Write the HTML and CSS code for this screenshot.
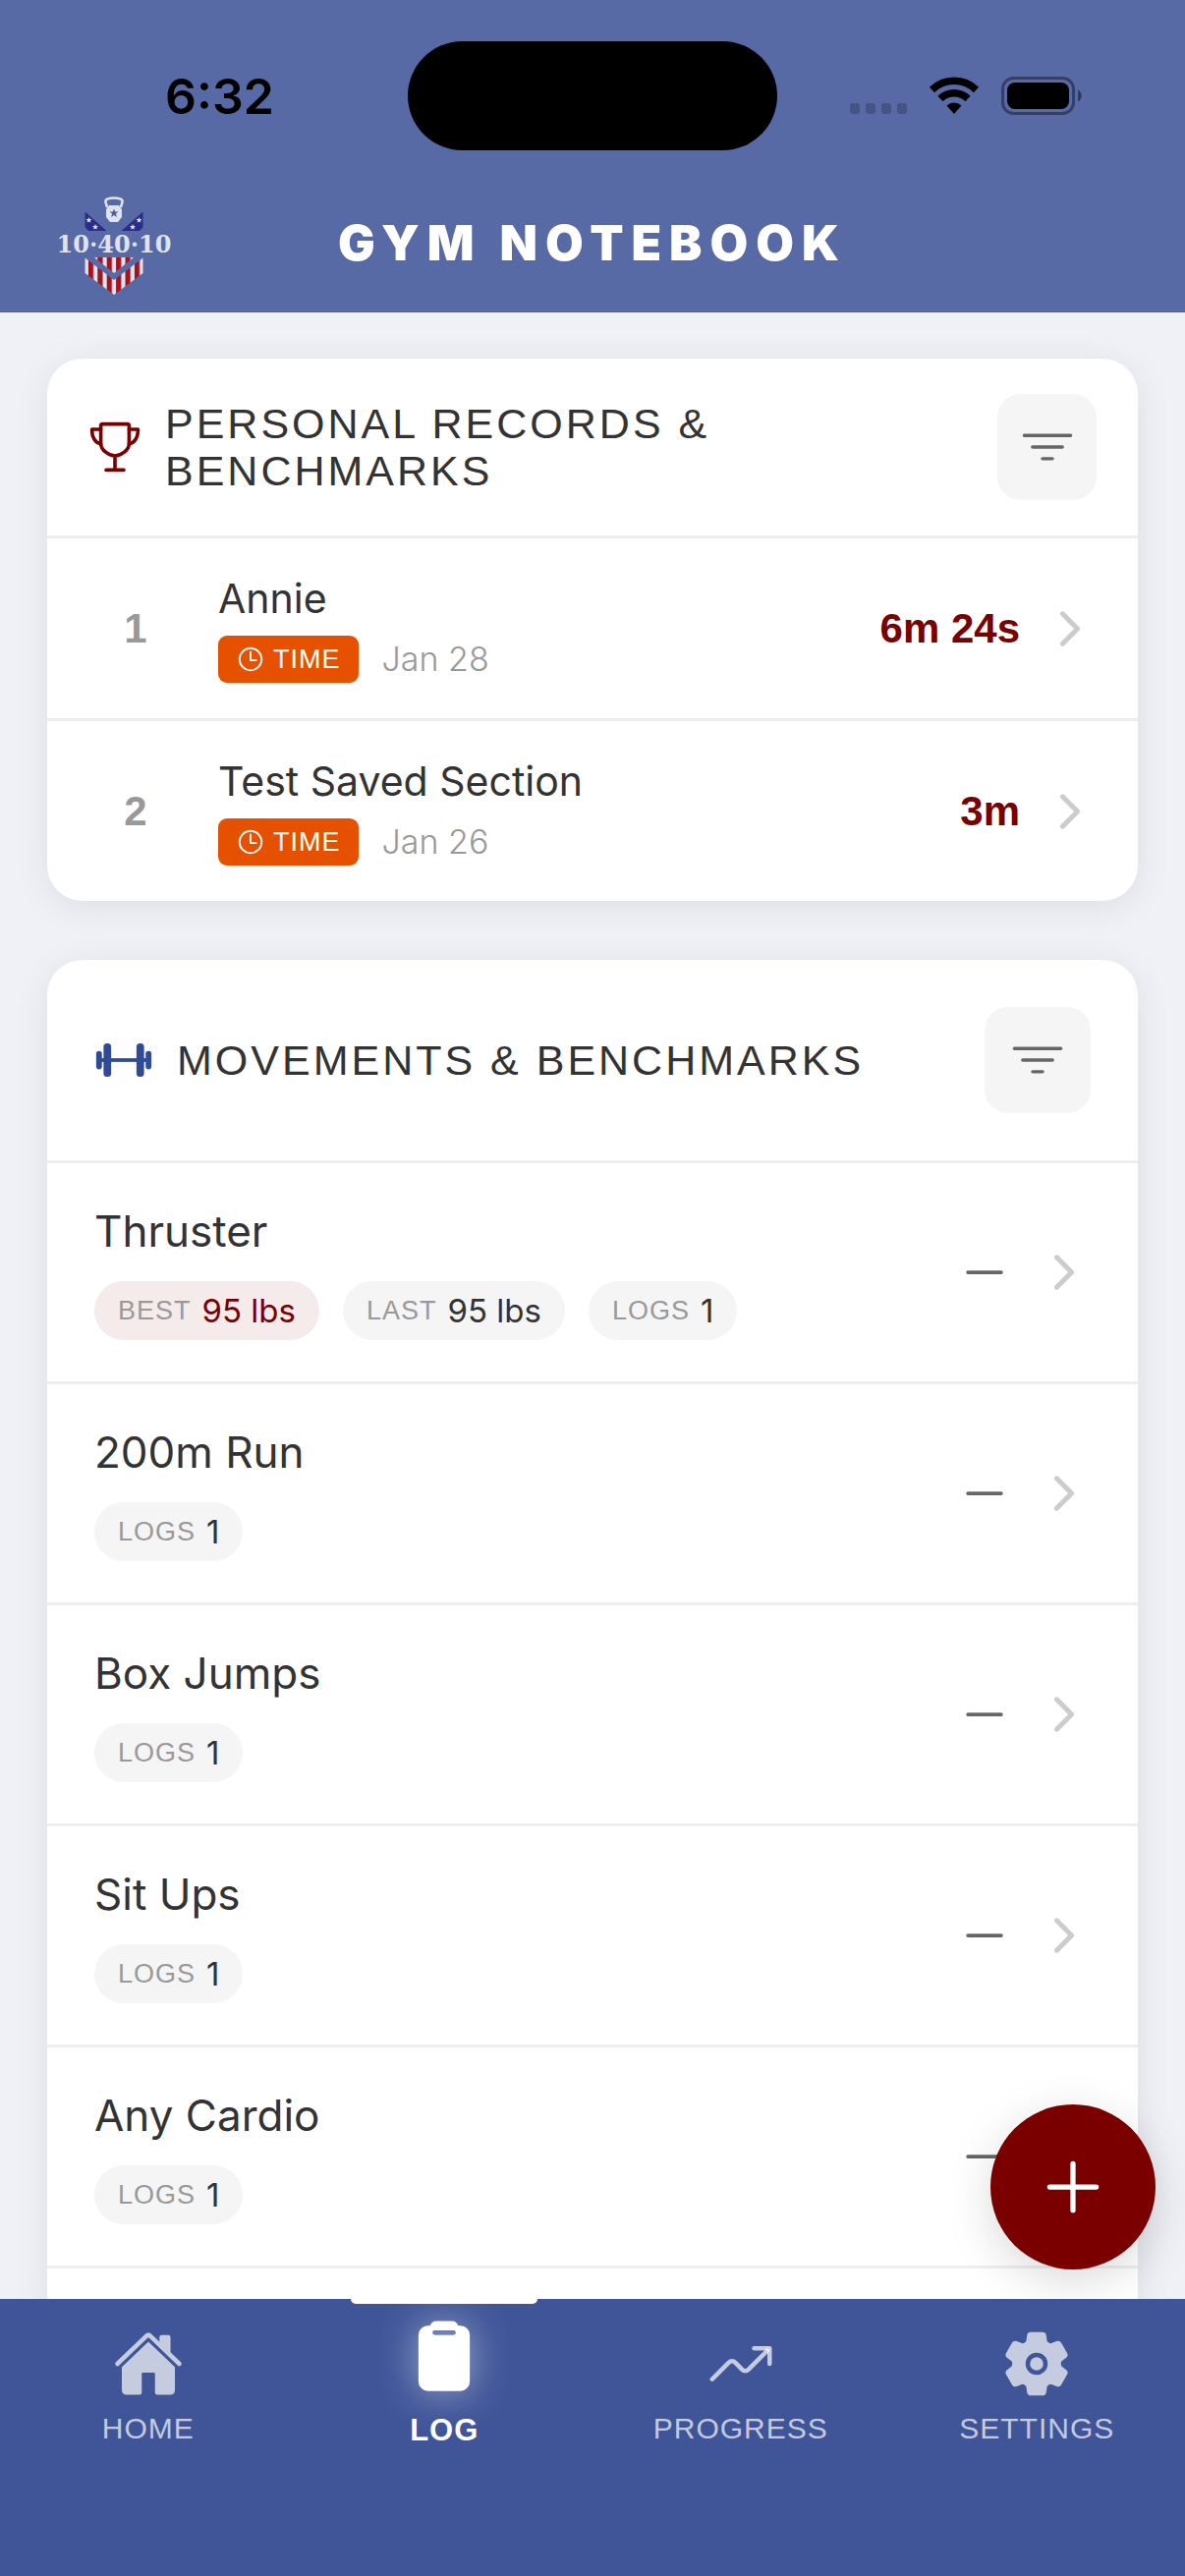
FILE: index.html
```html
<!DOCTYPE html>
<html lang="en">
<head>
    <meta charset="UTF-8">
    <meta name="viewport" content="width=device-width, initial-scale=1.0">
    <title>Gym Notebook</title>
    <link rel="stylesheet" href="styles.css">
</head>
<body>
    <!-- Icons shared by several parts of the page -->
    <svg class="sprite" aria-hidden="true">
        <symbol id="icon-filter" viewBox="0 0 512 512">
            <path d="M32 144h448M112 256h288M208 368h96" fill="none" stroke="currentColor" stroke-width="32" stroke-linecap="round"/>
        </symbol>
        <symbol id="icon-chevron" viewBox="0 0 512 512">
            <path d="M184 112l144 144-144 144" fill="none" stroke="currentColor" stroke-width="48" stroke-linecap="round" stroke-linejoin="round"/>
        </symbol>
        <symbol id="icon-remove" viewBox="0 0 512 512">
            <path d="M400 256H112" fill="none" stroke="currentColor" stroke-width="32" stroke-linecap="round"/>
        </symbol>
        <symbol id="icon-time" viewBox="0 0 512 512">
            <path d="M256 64C150 64 64 150 64 256s86 192 192 192 192-86 192-192S362 64 256 64z" fill="none" stroke="currentColor" stroke-width="32"/>
            <path d="M256 128v144h96" fill="none" stroke="currentColor" stroke-width="32" stroke-linecap="round" stroke-linejoin="round"/>
        </symbol>
    </svg>

    <header class="app-header">
        <div class="status-bar">
            <span class="clock">6:32</span>
            <div class="island"></div>
            <div class="status-icons">
                <svg width="58" height="38" viewBox="0 0 58 38">
                    <g fill="#000" opacity="0.2">
                        <rect x="0" y="27" width="10" height="11" rx="3"/>
                        <rect x="16" y="27" width="10" height="11" rx="3"/>
                        <rect x="32" y="27" width="10" height="11" rx="3"/>
                        <rect x="48" y="27" width="10" height="11" rx="3"/>
                    </g>
                </svg>
                <svg width="52" height="38" viewBox="0 0 52 38">
                    <path d="M3.5 13.5A32 32 0 0 1 48.5 13.5" fill="none" stroke="#000" stroke-width="7.5"/>
                    <path d="M12 22.500A20 20 0 0 1 40 22.5" fill="none" stroke="#000" stroke-width="7.5"/>
                    <path d="M26 38l-7.500-8.500a11 11 0 0 1 15 0z"/>
                </svg>
                <svg width="82" height="39" viewBox="0 0 82 39">
                    <rect x="1.5" y="1.5" width="72" height="36" rx="11" fill="none" stroke="#000" stroke-opacity="0.4" stroke-width="3"/>
                    <rect x="6" y="6" width="63" height="27" rx="8"/>
                    <path d="M78 13.500c5 2 5 10 0 12z" opacity="0.45"/>
                </svg>
            </div>
        </div>
        <div class="title-bar">
            <svg class="logo" width="120" height="102" viewBox="0 0 120 102" role="img" aria-label="10 40 10">
                <defs>
                    <pattern id="stripes" width="9.4" height="100" x="-3.7" patternUnits="userSpaceOnUse">
                        <rect width="9.4" height="100" fill="#dfe2ef"/>
                        <rect width="5.2" height="100" fill="#a01520"/>
                    </pattern>
                    <path id="star" d="M0-3l.8 2h2.200l-1.700 1.400.6 2.200L0 1.400-1.900 2.600l.6-2.200L-3-1h2.200z"/>
                </defs>
                <path d="M53 12L51.500 6.500C51 3.500 55 2.500 60 2.500s9 1 8.500 4L67 12" fill="none" stroke="#dfe2ef" stroke-width="2.6"/>
                <path d="M55 10h10l3 4v8l-4 5h-8l-4-5v-8z" fill="#dfe2ef"/>
                <use href="#star" transform="translate(60 18) scale(1.5)" fill="#4d5e9c"/>
                <path d="M30.500 16.500L52.500 36H34l-3.500-4z" fill="#2a2d8a"/>
                <path d="M89.500 16.500L67.500 36H86l3.500-4z" fill="#2a2d8a"/>
                <g fill="#dfe2ef">
                    <use href="#star" x="34.5" y="25"/>
                    <use href="#star" x="41" y="32"/>
                    <use href="#star" x="85.5" y="25"/>
                    <use href="#star" x="79" y="32"/>
                </g>
                <text class="logo-text" x="60" y="58" text-anchor="middle">10·40·10</text>
                <path d="M40 63h40L60 79z" fill="url(#stripes)"/>
                <path d="M30.500 63.500L60 86l29.500-22.500V79L60 101 30.500 79z" fill="url(#stripes)"/>
            </svg>
            <h1>GYM NOTEBOOK</h1>
        </div>
    </header>

    <main>
        <!-- Personal records -->
        <section class="card records">
            <div class="card-header">
                <svg class="icon-trophy" width="54" height="54" viewBox="16 16 480 480" fill="none" stroke="currentColor" stroke-width="32" stroke-linecap="round" stroke-linejoin="round">
                    <path d="M176 464h160M256 464V336M384 224c0-50.640-.08-134.630-.12-160a16 16 0 00-16-16l-223.790.26a16 16 0 00-16 15.950c0 30.580-.13 129.170-.13 159.790 0 64.280 83 112 128 112s128-47.720 128-112z"/>
                    <path d="M128 96H48v16c0 55.220 33.550 112 80 112M384 96h80v16c0 55.220-33.550 112-80 112"/>
                </svg>
                <h2>PERSONAL RECORDS &amp; BENCHMARKS</h2>
                <button class="filter-btn" type="button" aria-label="Filter records"><svg width="54" height="54"><use href="#icon-filter"/></svg></button>
            </div>
            <ol class="rows">
                <li class="record">
                    <span class="rank">1</span>
                    <div class="info">
                        <h3>Annie</h3>
                        <div class="meta">
                            <span class="tag"><svg width="30" height="30"><use href="#icon-time"/></svg>TIME</span>
                            <span class="date">Jan 28</span>
                        </div>
                    </div>
                    <span class="result">6m 24s</span>
                    <svg class="chevron" width="54" height="54"><use href="#icon-chevron"/></svg>
                </li>
                <li class="record">
                    <span class="rank">2</span>
                    <div class="info">
                        <h3>Test Saved Section</h3>
                        <div class="meta">
                            <span class="tag"><svg width="30" height="30"><use href="#icon-time"/></svg>TIME</span>
                            <span class="date">Jan 26</span>
                        </div>
                    </div>
                    <span class="result">3m</span>
                    <svg class="chevron" width="54" height="54"><use href="#icon-chevron"/></svg>
                </li>
            </ol>
        </section>

        <!-- Movements -->
        <section class="card movements">
            <div class="card-header">
                <svg class="icon-barbell" width="60" height="60" viewBox="0 0 512 512" fill="currentColor">
                    <rect x="32" y="240" width="448" height="32"/>
                    <rect x="80" y="110" width="66" height="292" rx="30"/>
                    <rect x="366" y="110" width="66" height="292" rx="30"/>
                    <rect x="16" y="176" width="50" height="160" rx="24"/>
                    <rect x="446" y="176" width="50" height="160" rx="24"/>
                </svg>
                <h2>MOVEMENTS &amp; BENCHMARKS</h2>
                <button class="filter-btn" type="button" aria-label="Filter movements"><svg width="54" height="54"><use href="#icon-filter"/></svg></button>
            </div>
            <ul class="rows">
                <li class="movement">
                    <div class="info">
                        <h3>Thruster</h3>
                        <div class="pills">
                            <span class="pill best"><small>BEST</small>95 lbs</span>
                            <span class="pill"><small>LAST</small>95 lbs</span>
                            <span class="pill"><small>LOGS</small>1</span>
                        </div>
                    </div>
                    <svg class="trend" width="60" height="60"><use href="#icon-remove"/></svg>
                    <svg class="chevron" width="54" height="54"><use href="#icon-chevron"/></svg>
                </li>
                <li class="movement">
                    <div class="info">
                        <h3>200m Run</h3>
                        <div class="pills"><span class="pill"><small>LOGS</small>1</span></div>
                    </div>
                    <svg class="trend" width="60" height="60"><use href="#icon-remove"/></svg>
                    <svg class="chevron" width="54" height="54"><use href="#icon-chevron"/></svg>
                </li>
                <li class="movement">
                    <div class="info">
                        <h3>Box Jumps</h3>
                        <div class="pills"><span class="pill"><small>LOGS</small>1</span></div>
                    </div>
                    <svg class="trend" width="60" height="60"><use href="#icon-remove"/></svg>
                    <svg class="chevron" width="54" height="54"><use href="#icon-chevron"/></svg>
                </li>
                <li class="movement">
                    <div class="info">
                        <h3>Sit Ups</h3>
                        <div class="pills"><span class="pill"><small>LOGS</small>1</span></div>
                    </div>
                    <svg class="trend" width="60" height="60"><use href="#icon-remove"/></svg>
                    <svg class="chevron" width="54" height="54"><use href="#icon-chevron"/></svg>
                </li>
                <li class="movement">
                    <div class="info">
                        <h3>Any Cardio</h3>
                        <div class="pills"><span class="pill"><small>LOGS</small>1</span></div>
                    </div>
                    <svg class="trend" width="60" height="60"><use href="#icon-remove"/></svg>
                    <svg class="chevron" width="54" height="54"><use href="#icon-chevron"/></svg>
                </li>
            </ul>
        </section>
    </main>

    <button class="fab" type="button" aria-label="Add log">
        <svg width="84" height="84" viewBox="0 0 512 512" fill="none" stroke="currentColor" stroke-width="32" stroke-linecap="round">
            <path d="M256 112v288M400 256H112"/>
        </svg>
    </button>

    <nav class="tab-bar">
        <a class="tab" href="#home">
            <svg width="72" height="72" viewBox="0 0 512 512" fill="currentColor">
                <path d="M261.560 101.280a8 8 0 00-11.060 0L66.400 277.150a8 8 0 00-2.470 5.790L63.900 448a32 32 0 0032 32H192a16 16 0 0016-16V328a8 8 0 018-8h80a8 8 0 018 8v136a16 16 0 0016 16h96.060a32 32 0 0032-32V282.940a8 8 0 00-2.470-5.790z"/>
                <path d="M490.910 244.150l-74.800-71.560V64a16 16 0 00-16-16h-48a16 16 0 00-16 16v32l-57.920-55.380C272.770 35.140 264.710 32 256 32c-8.680 0-16.720 3.140-22.140 8.630l-212.700 203.500c-6.220 6-7 15.870-1.340 22.370A16 16 0 0043 267.560L250.500 69.280a8 8 0 0111.060 0l207.520 198.280a16 16 0 0022.590-.44c6.140-6.360 5.630-16.860-.76-22.970z"/>
            </svg>
            HOME
        </a>
        <a class="tab active" href="#log" aria-current="page">
            <svg width="76" height="76" viewBox="0 0 512 512" fill="currentColor">
                <path d="M368 48h-11.410a8 8 0 01-7.440-5.080A42.180 42.180 0 00309.870 16H202.130a42.180 42.180 0 00-39.280 26.920 8 8 0 01-7.440 5.080H144a64 64 0 00-64 64v320a64 64 0 0064 64h224a64 64 0 0064-64V112a64 64 0 00-64-64zm-48.130 64H192.130a16 16 0 010-32h127.740a16 16 0 010 32z"/>
            </svg>
            LOG
        </a>
        <a class="tab" href="#progress">
            <svg width="72" height="72" viewBox="0 0 512 512" fill="none" stroke="currentColor" stroke-width="32" stroke-linecap="round" stroke-linejoin="round">
                <path d="M352 144h112v112"/>
                <path d="M48 368l121.370-121.370a32 32 0 0145.260 0l50.740 50.740a32 32 0 0045.260 0L448 160"/>
            </svg>
            PROGRESS
        </a>
        <a class="tab" href="#settings">
            <svg width="72" height="72" viewBox="0 0 512 512" fill="currentColor">
                <circle cx="256" cy="256" r="48"/>
                <path d="M470.390 300l-.47-.38-31.560-24.750a16.110 16.110 0 01-6.100-13.330v-11.560a16 16 0 016.110-13.220L469.920 212l.47-.38a26.680 26.680 0 005.900-34.060l-42.710-73.900a1.590 1.590 0 01-.13-.22A26.860 26.860 0 00401 92.140l-.35.130-37.100 14.930a15.940 15.940 0 01-14.470-1.290q-4.920-3.100-10-5.860a15.940 15.940 0 01-8.190-11.820l-5.590-39.590-.12-.72A27.220 27.220 0 00298.760 26h-85.520a26.920 26.920 0 00-26.450 22.390l-.09.56-5.570 39.670a16 16 0 01-8.130 11.820 175.210 175.210 0 00-10 5.820 15.920 15.920 0 01-14.430 1.270l-37.130-15-.35-.14a26.870 26.870 0 00-32.480 11.340l-.13.22-42.770 73.950a26.710 26.710 0 005.900 34.100l.47.38 31.560 24.750a16.110 16.110 0 016.100 13.330v11.560a16 16 0 01-6.110 13.220L42.080 300l-.47.38a26.680 26.680 0 00-5.900 34.060l42.710 73.900a1.590 1.590 0 01.13.22 26.860 26.860 0 0032.450 11.300l.35-.13 37.070-14.930a15.940 15.940 0 0114.470 1.290q4.920 3.110 10 5.860a15.940 15.940 0 018.190 11.820l5.560 39.590.12.72A27.220 27.220 0 00213.240 486h85.520a26.920 26.920 0 0026.450-22.390l.09-.56 5.570-39.670a16 16 0 018.180-11.820c3.420-1.840 6.760-3.790 10-5.820a15.920 15.920 0 0114.430-1.270l37.130 14.950.35.14a26.850 26.850 0 0032.480-11.340 2.530 2.530 0 01.13-.22l42.710-73.890a26.700 26.700 0 00-5.890-34.110zM335.910 259.760a80 80 0 11-83.660-83.670 80.210 80.210 0 0183.660 83.670z"/>
            </svg>
            SETTINGS
        </a>
    </nav>
</body>
</html>
```
FILE: styles.css
```css
* {
    box-sizing: border-box;
}
body {
    margin: 0;
    height: 100vh;
    display: flex;
    flex-direction: column;
    font-family: "Liberation Sans", Arial, sans-serif;
    background-color: #f0f1f6;
    color: #333;
    position: relative;
}
h1, h2, h3, ul, ol {
    margin: 0;
    padding: 0;
    font-weight: normal;
}
svg {
    display: block;
    flex-shrink: 0;
}
button {
    border: none;
    padding: 0;
    cursor: pointer;
    display: flex;
    align-items: center;
    justify-content: center;
}
.sprite {
    position: absolute;
    width: 0;
    height: 0;
}

/* Header */
.app-header {
    flex-shrink: 0;
    background-color: #576aa5;
    border-bottom: 1px solid #4c5e9c;
}
.status-bar {
    display: grid;
    grid-template-columns: 1fr 376px 1fr;
    align-items: center;
    padding: 42px 0 30px;
}
.clock {
    padding-left: 32px;
    text-align: center;
    font-family: Inter, sans-serif;
    font-size: 50px;
    line-height: 60px;
    font-weight: 600;
    color: #000;
}
.island {
    height: 111px;
    border-radius: 56px;
    background-color: #000;
}
.status-icons {
    display: flex;
    justify-content: center;
    gap: 22px;
    padding-right: 32px;
}
.title-bar {
    display: grid;
    grid-template-columns: 1fr auto 1fr;
    align-items: center;
    padding: 0 56px 6px;
    height: 134px;
}
.logo {
    margin-top: 6px;
}
.logo-text {
    font-family: "DejaVu Serif", serif;
    font-size: 24px;
    font-weight: bold;
    fill: #dfe2ef;
}
h1 {
    font-family: Inter, sans-serif;
    font-size: 50px;
    line-height: 60px;
    font-weight: 900;
    letter-spacing: 8px;
    color: #fff;
}

/* Content */
main {
    flex: 1;
    min-height: 0;
    overflow: hidden;
    padding: 47px 48px 0;
}
.card {
    background-color: #fff;
    border-radius: 36px;
    box-shadow: 0 6px 36px rgba(0, 0, 0, 0.08);
    margin-bottom: 60px;
}
.card-header {
    display: flex;
    align-items: center;
    gap: 24px;
    padding: 48px;
    border-bottom: 3px solid #eee;
}
.records .card-header {
    padding: 36px 42px;
}
h2 {
    flex: 1;
    font-size: 43px;
    line-height: 48px;
    letter-spacing: 3px;
}
.icon-trophy {
    color: #7a0000;
}
.icon-barbell {
    color: #2f4a97;
}
.filter-btn {
    width: 108px;
    height: 108px;
    border-radius: 24px;
    background-color: #f5f5f5;
    color: #666;
}
.records .filter-btn {
    width: 101px;
}
.rows {
    list-style: none;
}
.rows li {
    display: flex;
    align-items: center;
    gap: 24px;
    border-bottom: 3px solid #eee;
}
.info {
    flex: 1;
}
h3 {
    font-family: Inter, sans-serif;
}
.chevron {
    color: #ccc;
}

/* Personal records */
.records .record {
    padding: 36px 42px;
}
.records .record:last-child {
    border-bottom: none;
}
.record h3 {
    font-size: 41px;
    line-height: 51px;
}
.rank {
    width: 96px;
    margin-right: 12px;
    text-align: center;
    font-size: 42px;
    font-weight: bold;
    color: #999;
}
.meta {
    display: flex;
    align-items: center;
    gap: 24px;
    margin-top: 12px;
}
.tag {
    display: flex;
    align-items: center;
    gap: 8px;
    height: 48px;
    padding: 0 18px;
    border-radius: 9px;
    background-color: #e65100;
    color: #fff;
    font-size: 27px;
    letter-spacing: 1px;
}
.date {
    font-family: Inter, sans-serif;
    font-size: 34px;
    line-height: 48px;
    font-weight: 300;
    color: #999;
}
.result {
    font-size: 42px;
    font-weight: bold;
    color: #7a0000;
}

/* Movements */
.movements {
    padding-bottom: 60px;
}
.movement {
    padding: 42px 48px;
}
.movement h3 {
    font-size: 44px;
    line-height: 54px;
}
.pills {
    display: flex;
    gap: 24px;
    margin-top: 24px;
}
.pill {
    display: flex;
    align-items: center;
    gap: 11px;
    height: 60px;
    padding: 0 24px;
    border-radius: 30px;
    background-color: #f5f5f5;
    font-family: Inter, sans-serif;
    font-size: 33px;
}
.pill small {
    font-family: "Liberation Sans", Arial, sans-serif;
    font-size: 27px;
    letter-spacing: 1px;
    color: #999;
}
.pill.best {
    background-color: #f5ebeb;
    color: #7a0000;
}
.trend {
    color: #666;
}

/* Floating add button */
.fab {
    position: absolute;
    right: 30px;
    bottom: 312px;
    width: 168px;
    height: 168px;
    border-radius: 50%;
    background-color: #7a0000;
    color: #fff;
    box-shadow: 0 12px 48px rgba(0, 0, 0, 0.15);
}

/* Bottom tabs */
.tab-bar {
    position: relative;
    flex-shrink: 0;
    display: grid;
    grid-template-columns: repeat(4, 1fr);
    height: 282px;
    background-color: #405598;
}
.tab {
    display: flex;
    flex-direction: column;
    align-items: center;
    gap: 12px;
    padding-top: 30px;
    font-size: 30px;
    line-height: 36px;
    letter-spacing: 1px;
    text-decoration: none;
    color: rgba(255, 255, 255, 0.7);
}
.tab.active {
    position: relative;
    padding-top: 20px;
    gap: 20px;
    font-size: 31px;
    font-weight: bold;
    color: #fff;
}
.tab.active::before {
    content: "";
    position: absolute;
    top: 0;
    width: 190px;
    height: 5px;
    border-radius: 0 0 6px 6px;
    background-color: #fff;
}
.tab.active svg {
    filter: drop-shadow(0 0 20px rgba(255, 255, 255, 0.5));
}
```
